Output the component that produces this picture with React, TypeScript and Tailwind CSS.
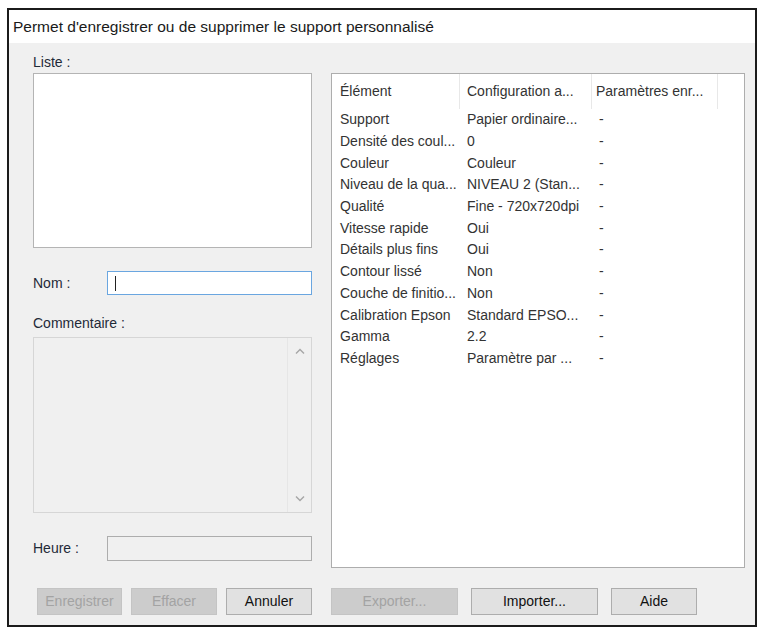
import React from 'react';

const rows: [string, string, string][] = [
  ['Support', 'Papier ordinaire...', '-'],
  ['Densité des coul...', '0', '-'],
  ['Couleur', 'Couleur', '-'],
  ['Niveau de la qua...', 'NIVEAU 2 (Stan...', '-'],
  ['Qualité', 'Fine - 720x720dpi', '-'],
  ['Vitesse rapide', 'Oui', '-'],
  ['Détails plus fins', 'Oui', '-'],
  ['Contour lissé', 'Non', '-'],
  ['Couche de finitio...', 'Non', '-'],
  ['Calibration Epson', 'Standard EPSO...', '-'],
  ['Gamma', '2.2', '-'],
  ['Réglages', 'Paramètre par ...', '-'],
];

const Btn = ({ label, disabled, w }: { label: string; disabled?: boolean; w: string }) => (
  <div
    className={`${w} h-[27px] flex items-center justify-center border text-[14px] ${
      disabled ? 'bg-[#cccccc] border-[#c4c4c4] text-[#a3a3a3]' : 'bg-[#e1e1e1] border-[#adadad] text-[#111]'
    }`}
  >
    {label}
  </div>
);

export default function App() {
  return (
    <div className="w-[768px] h-[632px] bg-white pt-[8px] pl-[7px] font-['Liberation_Sans',Arial,sans-serif] text-[14px] text-[#222]">
      <div className="w-[750px] h-[619px] border-2 border-[#1b1b1b] flex flex-col">
        {/* title */}
        <div className="h-[33px] bg-white flex items-center pl-[4px] text-[15.5px] text-[#1a1a1a]">
          Permet d'enregistrer ou de supprimer le support personnalisé
        </div>

        {/* body */}
        <div className="flex-1 bg-[#f0f0f0] pt-[9px] pl-[24px]">
          <div className="flex gap-[19px] items-start">
            {/* left column */}
            <div className="w-[279px] flex flex-col">
              <div className="h-[20px] leading-[20px] text-[#1f2a38]">Liste :</div>
              <div className="mt-[1px] h-[175px] bg-white border border-[#b4b4b4]" />

              <div className="mt-[23px] h-[24px] flex items-center">
                <div className="w-[74px] text-[#1f2a38]">Nom :</div>
                <div className="w-[205px] h-[24px] bg-white border border-[#6aa6e0] flex items-center pl-[7px]">
                  <div className="w-[1px] h-[15px] bg-[#222]" />
                </div>
              </div>

              <div className="mt-[18px] h-[20px] leading-[20px] text-[#1f2a38]">Commentaire :</div>
              <div className="mt-[4px] h-[176px] bg-[#f0f0f0] border border-[#d6d6d6] flex">
                <div className="flex-1" />
                <div className="w-[24px] border-l border-[#e6e6e6] flex flex-col items-center justify-between py-[10px]">
                  <svg width="10" height="6" viewBox="0 0 10 6" fill="none" stroke="#a6a6a6" strokeWidth="1.4">
                    <path d="M1 5.5L5 1.5L9 5.5" />
                  </svg>
                  <svg width="10" height="6" viewBox="0 0 10 6" fill="none" stroke="#a6a6a6" strokeWidth="1.4">
                    <path d="M1 0.5L5 4.5L9 0.5" />
                  </svg>
                </div>
              </div>

              <div className="mt-[23px] h-[25px] flex items-center">
                <div className="w-[74px] text-[#1f2a38]">Heure :</div>
                <div className="w-[205px] h-[25px] bg-[#f0f0f0] border border-[#adadad]" />
              </div>
            </div>

            {/* right list view */}
            <div className="mt-[21px] w-[414px] h-[495px] bg-white border border-[#adadad] text-[#333]">
              <div className="h-[35px] flex">
                <div className="w-[128px] pl-[8px] flex items-center border-r border-[#e8e8e8]">Élément</div>
                <div className="w-[132px] pl-[7px] flex items-center border-r border-[#e8e8e8]">Configuration a...</div>
                <div className="w-[126px] pl-[4px] flex items-center border-r border-[#e8e8e8]">Paramètres enr...</div>
              </div>
              {rows.map(([a, b, c]) => (
                <div key={a} className="h-[21.7px] flex items-center">
                  <div className="w-[128px] pl-[8px] whitespace-nowrap">{a}</div>
                  <div className="w-[132px] pl-[7px] whitespace-nowrap">{b}</div>
                  <div className="w-[126px] pl-[7px]">{c}</div>
                </div>
              ))}
            </div>
          </div>

          {/* buttons */}
          <div className="mt-[20px] flex">
            <div className="ml-[4px] flex gap-[9px]">
              <Btn label="Enregistrer" disabled w="w-[85px]" />
              <Btn label="Effacer" disabled w="w-[86px]" />
              <Btn label="Annuler" w="w-[86px]" />
            </div>
            <div className="ml-[19px] flex gap-[13px]">
              <Btn label="Exporter..." disabled w="w-[127px]" />
              <Btn label="Importer..." w="w-[127px]" />
              <Btn label="Aide" w="w-[86px]" />
            </div>
          </div>
        </div>
      </div>
    </div>
  );
}
